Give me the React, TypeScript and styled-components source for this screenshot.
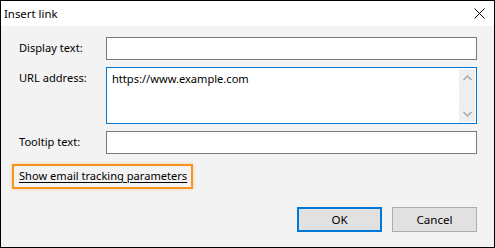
import React from "react";
import styled, { createGlobalStyle } from "styled-components";

const GlobalStyle = createGlobalStyle`
  html, body {
    margin: 0;
    padding: 0;
    background: #ffffff;
  }
  * {
    box-sizing: border-box;
  }
`;

const UI_FONT = `"Noto Sans", "Open Sans", sans-serif`;

const Dialog = styled.div`
  width: 495px;
  height: 248px;
  border: 1px solid #000000;
  display: flex;
  flex-direction: column;
  background: #f3f3f3;
  font-family: ${UI_FONT};
  font-size: 11.1px;
  color: #000000;
`;

const TitleBar = styled.div`
  height: 25px;
  background: #ffffff;
  display: flex;
  align-items: center;
  justify-content: space-between;
  padding: 0 9px 0 3px;
`;

const Title = styled.span`
  font-size: 11.4px;
`;

const CloseButton = styled.button`
  border: 0;
  background: transparent;
  padding: 0;
  width: 11px;
  height: 11px;
  display: flex;
  cursor: default;
`;

const Body = styled.div`
  flex: 1;
  display: flex;
  flex-direction: column;
  padding: 11px 17px 15px 17px;
`;

const Form = styled.div`
  display: grid;
  grid-template-columns: 88px 1fr;
  row-gap: 7px;
  align-items: start;
`;

const Label = styled.label<{ $top: number }>`
  padding-top: ${({ $top }) => $top}px;
  padding-left: 1px;
  line-height: 16px;
`;

const TextField = styled.input`
  height: 23px;
  width: 100%;
  border: 1px solid #7a7a7a;
  background: #ffffff;
  font: inherit;
  padding: 0 5px;
  outline: none;
`;

const AreaBox = styled.div`
  height: 57px;
  border: 1px solid #0078d7;
  background: #ffffff;
  display: flex;
  padding: 1px 1px 1px 0;
`;

const AreaText = styled.div`
  flex: 1;
  padding: 2px 0 0 5px;
  line-height: 16px;
`;

const ScrollTrack = styled.div`
  width: 16px;
  background: #efefef;
  display: flex;
  flex-direction: column;
  justify-content: space-between;
  align-items: center;
  padding: 6px 0 5px;
`;

const LinkRow = styled.div`
  margin-top: 10px;
  margin-left: -6px;
  display: flex;
`;

const FocusLink = styled.a`
  display: inline-block;
  border: 2px solid #f7941d;
  box-shadow: 0 0 3px rgba(247, 148, 29, 0.35);
  padding: 2px 4px 3px 5px;
  color: #000000;
  text-decoration: underline;
  text-underline-offset: 2px;
  line-height: 16px;
`;

const Footer = styled.div`
  margin-top: auto;
  display: flex;
  justify-content: flex-end;
  gap: 10px;
`;

const Button = styled.button<{ $primary?: boolean }>`
  width: 85px;
  height: 25px;
  background: #e1e1e1;
  border: ${({ $primary }) => ($primary ? "2px solid #0078d7" : "1px solid #adadad")};
  font: inherit;
  font-size: 11.6px;
  color: #000000;
  padding: 0;
`;

const Chevron = ({ up }: { up?: boolean }) => (
  <svg width="9" height="6" viewBox="0 0 9 6">
    <path
      d={up ? "M0.5 5 L4.5 1 L8.5 5" : "M0.5 1 L4.5 5 L8.5 1"}
      fill="none"
      stroke="#a6a6a6"
      strokeWidth="1.4"
    />
  </svg>
);

export default function App() {
  return (
    <>
      <GlobalStyle />
      <Dialog>
        <TitleBar>
          <Title>Insert link</Title>
          <CloseButton aria-label="Close">
            <svg width="11" height="11" viewBox="0 0 11 11">
              <path d="M0.5 0.5 L10.5 10.5 M10.5 0.5 L0.5 10.5" stroke="#000" strokeWidth="1" />
            </svg>
          </CloseButton>
        </TitleBar>
        <Body>
          <Form>
            <Label $top={3}>Display text:</Label>
            <TextField />
            <Label $top={3}>URL address:</Label>
            <AreaBox>
              <AreaText>https://www.example.com</AreaText>
              <ScrollTrack>
                <Chevron up />
                <Chevron />
              </ScrollTrack>
            </AreaBox>
            <Label $top={3}>Tooltip text:</Label>
            <TextField />
          </Form>
          <LinkRow>
            <FocusLink href="#">Show email tracking parameters</FocusLink>
          </LinkRow>
          <Footer>
            <Button $primary>OK</Button>
            <Button>Cancel</Button>
          </Footer>
        </Body>
      </Dialog>
    </>
  );
}
